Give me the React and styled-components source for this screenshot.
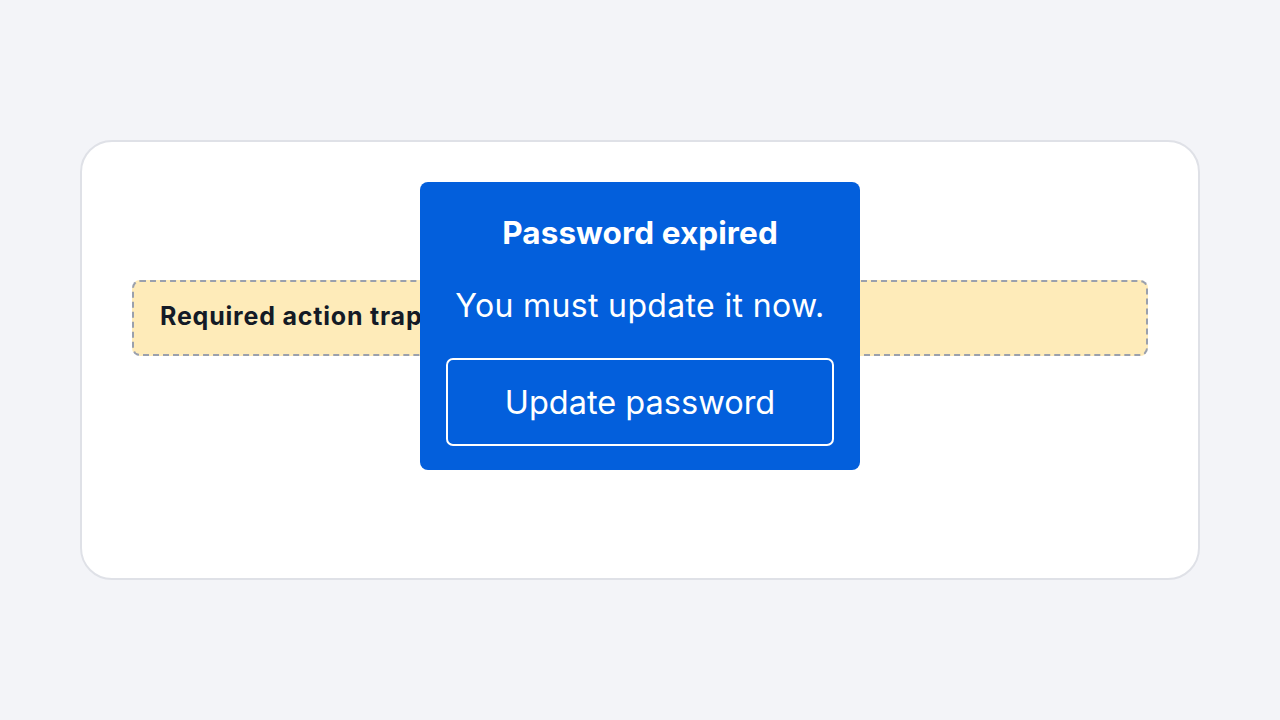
import React from 'react';
import styled, { createGlobalStyle } from 'styled-components';

const GlobalStyle = createGlobalStyle`
	html, body {
		margin: 0;
		padding: 0;
		background: #f3f4f8;
		font-family: 'Inter', 'Noto Sans', sans-serif;
	}
	* {
		box-sizing: border-box;
	}
`;

function App() {
	return (
		<>
			<GlobalStyle />
			<Page>
				<Card>
					<Banner>Required action trap</Banner>
					<Dialog role="dialog" aria-labelledby="pw-title">
						<Title id="pw-title">Password expired</Title>
						<Message>You must update it now.</Message>
						<OutlineButton type="button">Update password</OutlineButton>
					</Dialog>
				</Card>
			</Page>
		</>
	);
}

export default App;

const Page = styled.div`
	width: 1280px;
	height: 720px;
	display: flex;
	align-items: center;
	justify-content: center;
`;

const Card = styled.div`
	position: relative;
	width: 1120px;
	height: 440px;
	padding: 138px 50px 0;
	background: #ffffff;
	border: 2px solid #dfe1e7;
	border-radius: 32px;
`;

const Banner = styled.div`
	height: 76px;
	display: flex;
	align-items: center;
	padding-left: 26px;
	padding-bottom: 4px;
	background: #feebb9;
	border: 2px dashed #9aa0ad;
	border-radius: 8px;
	color: #141a26;
	font-size: 25px;
	font-weight: 700;
	letter-spacing: 0.8px;
	white-space: nowrap;
`;

const Dialog = styled.div`
	position: absolute;
	top: 40px;
	left: 338px;
	width: 440px;
	height: 288px;
	padding: 28px 26px 0;
	display: flex;
	flex-direction: column;
	align-items: stretch;
	background: #035fdc;
	border-radius: 8px;
	color: #ffffff;
	text-align: center;
`;

const Title = styled.h2`
	margin: 0;
	font-size: 31.5px;
	font-weight: 700;
	line-height: 44px;
	letter-spacing: 0.1px;
	transform: translateY(1px);
`;

const Message = styled.p`
	margin: 30px 0 0;
	font-size: 32px;
	font-weight: 400;
	line-height: 44px;
	letter-spacing: 0.35px;
`;

const OutlineButton = styled.button`
	margin-top: 30px;
	height: 88px;
	background: transparent;
	border: 2px solid #ffffff;
	border-radius: 7px;
	color: #ffffff;
	font-family: inherit;
	font-size: 32.5px;
	font-weight: 400;
	cursor: pointer;
`;
